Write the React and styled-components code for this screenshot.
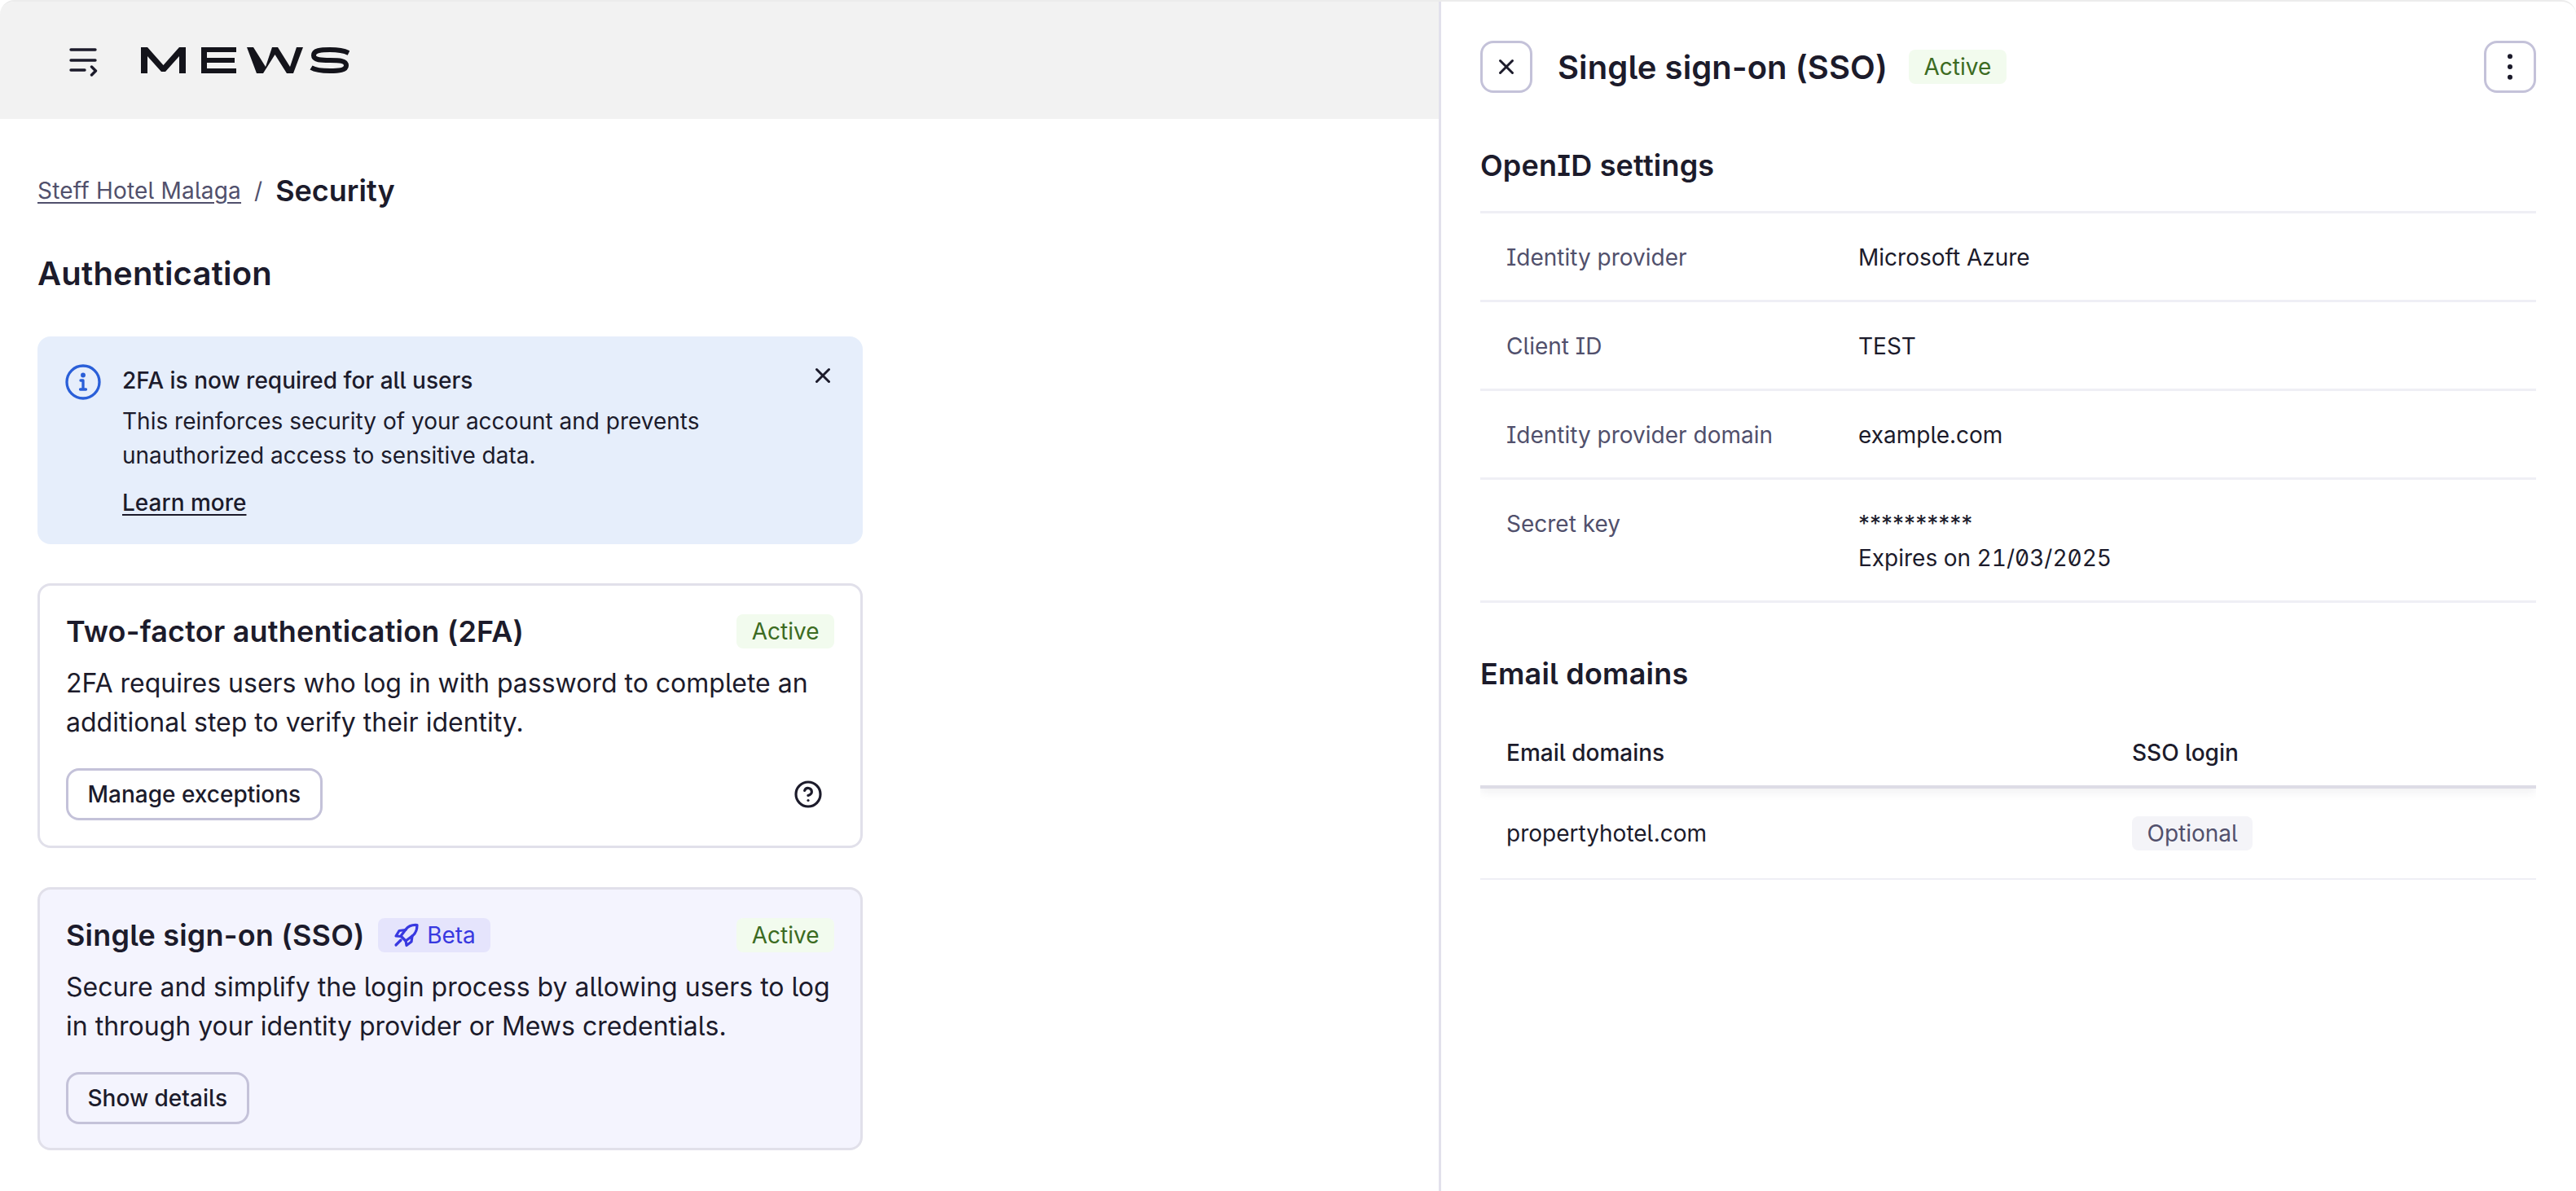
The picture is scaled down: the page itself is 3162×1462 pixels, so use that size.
import React from 'react';
import styled, { createGlobalStyle } from 'styled-components';
import { X, CircleHelp, EllipsisVertical } from 'lucide-react';

const GlobalStyle = createGlobalStyle`
  html, body { margin: 0; padding: 0; background: #fff; }
  body {
    font-family: Inter, "Noto Sans", sans-serif;
    font-feature-settings: "ss02";
    color: #1c1b2b;
    -webkit-font-smoothing: antialiased;
  }
  * { box-sizing: border-box; }
`;

const Page = styled.div`
  display: flex;
  width: 3162px;
  height: 1462px;
  overflow: hidden;
  border-top: 2px solid #ececec;
  border-radius: 18px 18px 0 0;
`;

const Main = styled.main`
  width: 1766px;
  flex-shrink: 0;
`;

const TopBar = styled.header`
  display: flex;
  align-items: center;
  height: 144px;
  padding-left: 85px;
  gap: 52px;
  background: #f2f2f2;
`;

const Content = styled.div`
  display: flex;
  flex-direction: column;
  padding: 60px 46px 0;
`;

const Breadcrumb = styled.nav`
  display: flex;
  align-items: center;
  height: 56px;
  gap: 16px;
  margin-bottom: 46px;
`;

const CrumbLink = styled.a`
  font-size: 28px;
  letter-spacing: 0.2px;
  color: #51506c;
  text-decoration: underline;
  text-underline-offset: 4px;
`;

const CrumbSep = styled.span`
  font-size: 28px;
  color: #51506c;
`;

const CrumbCurrent = styled.span`
  font-size: 36px;
  font-weight: 600;
`;

const PageTitle = styled.h1`
  margin: 0 0 49px;
  font-size: 40px;
  line-height: 56px;
  font-weight: 600;
  letter-spacing: 0.2px;
`;

const Alert = styled.section`
  display: flex;
  width: 1013px;
  height: 255px;
  padding: 33px 31px 0 34px;
  gap: 26px;
  background: #e6eefb;
  border-radius: 16px;
`;

const AlertIcon = styled.svg`
  flex-shrink: 0;
  margin-top: 1px;
`;

const AlertBody = styled.div`
  flex: 1;
  font-size: 28px;
  line-height: 42px;
`;

const AlertTitle = styled.div`
  font-weight: 500;
  margin-bottom: 8px;
`;

const AlertLink = styled.a`
  display: block;
  margin-top: 16px;
  font-weight: 500;
  color: #1c1b2b;
  text-decoration: underline;
  text-underline-offset: 4px;
`;

const AlertClose = styled.span`
  display: flex;
  align-items: center;
  justify-content: center;
  width: 36px;
  height: 36px;
  margin-top: -3px;
`;

const Card = styled.section`
  width: 1013px;
  height: ${({ $height }) => $height}px;
  margin-top: 48px;
  padding: 32px 32px 0 32px;
  background: ${({ $tinted }) => ($tinted ? '#f4f4fe' : '#fff')};
  border: 3px solid #e1e0ea;
  border-radius: 16px;
`;

const CardHead = styled.div`
  display: flex;
  align-items: center;
  height: 48px;
  gap: 16px;
`;

const CardTitle = styled.h2`
  margin: 0;
  font-size: 36px;
  font-weight: 600;
  line-height: 48px;
  letter-spacing: 0.2px;
`;

const Badge = styled.span`
  display: inline-flex;
  align-items: center;
  height: 42px;
  gap: 10px;
  padding: 0 18.5px;
  font-size: 28px;
  border-radius: 8px;
  color: ${({ $color }) => $color};
  background: ${({ $bg }) => $bg};
`;

const Spacer = styled.div`
  flex: 1;
`;

const CardText = styled.p`
  margin: 16px 0 32px;
  font-size: 32px;
  line-height: 48px;
`;

const CardActions = styled.div`
  display: flex;
  align-items: center;
  justify-content: space-between;
  padding-right: 14px;
`;

const Button = styled.button`
  display: inline-flex;
  align-items: center;
  justify-content: center;
  height: 64px;
  padding: 0 23.5px;
  font: 500 28px Inter, sans-serif;
  font-feature-settings: "ss02";
  color: #1c1b2b;
  background: ${({ $tinted }) => ($tinted ? '#f4f4fe' : '#fff')};
  border: 3px solid #c4c2d9;
  border-radius: 16px;
`;

const IconButton = styled(Button)`
  width: 64px;
  padding: 0;
  background: #fff;
`;

const Panel = styled.aside`
  flex: 1;
  padding: 48px 49px 0 48px;
  border-left: 3px solid #e2e1ec;
`;

const PanelHead = styled.div`
  display: flex;
  align-items: center;
  height: 64px;
  gap: 26px;
`;

const PanelTitle = styled.h2`
  margin: 0 0 0 5px;
  font-size: 40px;
  font-weight: 600;
  letter-spacing: 0.1px;
`;

const SectionTitle = styled.h3`
  margin: ${({ $top }) => $top}px 0 0;
  font-size: 36px;
  line-height: 48px;
  font-weight: 600;
  letter-spacing: 0.2px;
`;

const DetailList = styled.div`
  margin-top: 32px;
  border-top: 3px solid #efeff5;
`;

const DetailRow = styled.div`
  display: grid;
  grid-template-columns: 432px 1fr;
  padding: 33px 32px 31px;
  font-size: 28px;
  line-height: 42px;
  border-bottom: 3px solid #efeff5;
`;

const DetailLabel = styled.div`
  color: #51506c;
`;

const Expiry = styled.span`
  font-feature-settings: "ss02", "tnum";
`;

const Table = styled.div`
  margin-top: 32px;
  overflow: hidden;
`;

const TableHead = styled.div`
  display: grid;
  grid-template-columns: 768px 1fr;
  align-items: center;
  height: 85px;
  padding: 0 32px;
  font-size: 28px;
  font-weight: 500;
  border-bottom: 4px solid #dddce6;
  box-shadow: 0 4px 12px rgba(30, 30, 60, 0.07);
`;

const TableRow = styled.div`
  display: grid;
  grid-template-columns: 768px 1fr;
  align-items: center;
  height: 112px;
  padding: 0 32px;
  font-size: 28px;
  border-bottom: 2px solid #efeff5;
`;

const BadgeCell = styled.div`
  display: flex;
`;

function MenuIcon() {
  return (
    <svg width="36" height="40" viewBox="0 0 36 40" fill="none" stroke="#1c1b2b" strokeWidth="3.4" strokeLinecap="round" strokeLinejoin="round">
      <path d="M2 7h30M2 20h30M2 32h17" />
      <path d="M27.5 28l5 5-5 5" />
    </svg>
  );
}

function MewsLogo() {
  return (
    <svg width="256" height="32" viewBox="0 0 256 32" fill="#14141b">
      <path d="M0 0H8L27.5 22 47 0H55V32H47V11L30 30H25L8 11V32H0Z" />
      <path d="M74 0H117V6H81V13H115V19H81V26H117V32H74Z" />
      <path d="M130 0H138L153 24 161 0H168L183 24 191 0H199L187 32H179L164.500 9 150 32H142Z" />
      <path d="M255 7C249 4 241 3 232 3 220 3 212 4 212 10 212 16 221 16 232 16 243 16 252 16 252 22.500 252 28 243 29 232 29 223 29 214 28 209 25" fill="none" stroke="#14141b" strokeWidth="6" />
    </svg>
  );
}

function InfoIcon() {
  return (
    <AlertIcon width="44" height="44" viewBox="0 0 44 44" fill="none" stroke="#2a5fd8" strokeWidth="3.3" strokeLinecap="round" strokeLinejoin="round">
      <circle cx="22" cy="22" r="20" />
      <circle cx="22" cy="13.500" r="1.300" fill="#2a5fd8" />
      <path d="M19 20h3v11M18.500 31h7" />
    </AlertIcon>
  );
}

function BetaRocket() {
  return (
    <svg width="32" height="32" viewBox="0 0 32 32" fill="none" stroke="currentColor" strokeWidth="3.200" strokeLinecap="round" strokeLinejoin="round">
      <path d="M30 3.500C24 3 19 5 16 9L10 17 16 23 24 17C28 14 30 9 30 3.500Z" />
      <path d="M16 9.500L8 10.500 4 17 10.500 17.500" />
      <path d="M24 17L23 24 17 28.500 16 22.500" />
      <path d="M10 22L4 28" />
    </svg>
  );
}

export default function App() {
  return (
    <Page>
      <GlobalStyle />
      <Main>
        <TopBar>
          <MenuIcon />
          <MewsLogo />
        </TopBar>
        <Content>
          <Breadcrumb>
            <CrumbLink>Steff Hotel Malaga</CrumbLink>
            <CrumbSep>/</CrumbSep>
            <CrumbCurrent>Security</CrumbCurrent>
          </Breadcrumb>
          <PageTitle>Authentication</PageTitle>
          <Alert>
            <InfoIcon />
            <AlertBody>
              <AlertTitle>2FA is now required for all users</AlertTitle>
              This reinforces security of your account and prevents
              <br />
              unauthorized access to sensitive data.
              <AlertLink>Learn more</AlertLink>
            </AlertBody>
            <AlertClose><X size={30} strokeWidth={2.4} /></AlertClose>
          </Alert>
          <Card $height={325}>
            <CardHead>
              <CardTitle>Two-factor authentication (2FA)</CardTitle>
              <Spacer />
              <Badge $color="#3c6b22" $bg="#f2fbee">Active</Badge>
            </CardHead>
            <CardText>
              2FA requires users who log in with password to complete an
              <br />
              additional step to verify their identity.
            </CardText>
            <CardActions>
              <Button>Manage exceptions</Button>
              <CircleHelp size={36} strokeWidth={2.1} />
            </CardActions>
          </Card>
          <Card $height={323} $tinted>
            <CardHead>
              <CardTitle>Single sign-on (SSO)</CardTitle>
              <Badge $color="#3838e0" $bg="#e5e4fc">
                <BetaRocket />
                Beta
              </Badge>
              <Spacer />
              <Badge $color="#3c6b22" $bg="#f2fbee">Active</Badge>
            </CardHead>
            <CardText>
              Secure and simplify the login process by allowing users to log
              <br />
              in through your identity provider or Mews credentials.
            </CardText>
            <CardActions>
              <Button $tinted>Show details</Button>
            </CardActions>
          </Card>
        </Content>
      </Main>
      <Panel>
        <PanelHead>
          <IconButton><X size={30} strokeWidth={2.4} /></IconButton>
          <PanelTitle>Single sign-on (SSO)</PanelTitle>
          <Badge $color="#3c6b22" $bg="#f2fbee">Active</Badge>
          <Spacer />
          <IconButton><EllipsisVertical size={44} strokeWidth={1.3} fill="#1c1b2b" /></IconButton>
        </PanelHead>
        <SectionTitle $top={65}>OpenID settings</SectionTitle>
        <DetailList>
          <DetailRow>
            <DetailLabel>Identity provider</DetailLabel>
            <div>Microsoft Azure</div>
          </DetailRow>
          <DetailRow>
            <DetailLabel>Client ID</DetailLabel>
            <div>TEST</div>
          </DetailRow>
          <DetailRow>
            <DetailLabel>Identity provider domain</DetailLabel>
            <div>example.com</div>
          </DetailRow>
          <DetailRow>
            <DetailLabel>Secret key</DetailLabel>
            <div>
              **********
              <br />
              <Expiry>Expires on 21/03/2025</Expiry>
            </div>
          </DetailRow>
        </DetailList>
        <SectionTitle $top={63}>Email domains</SectionTitle>
        <Table>
          <TableHead>
            <div>Email domains</div>
            <div>SSO login</div>
          </TableHead>
          <TableRow>
            <div>propertyhotel.com</div>
            <BadgeCell>
              <Badge $color="#51506c" $bg="#f4f4f8">Optional</Badge>
            </BadgeCell>
          </TableRow>
        </Table>
      </Panel>
    </Page>
  );
}
